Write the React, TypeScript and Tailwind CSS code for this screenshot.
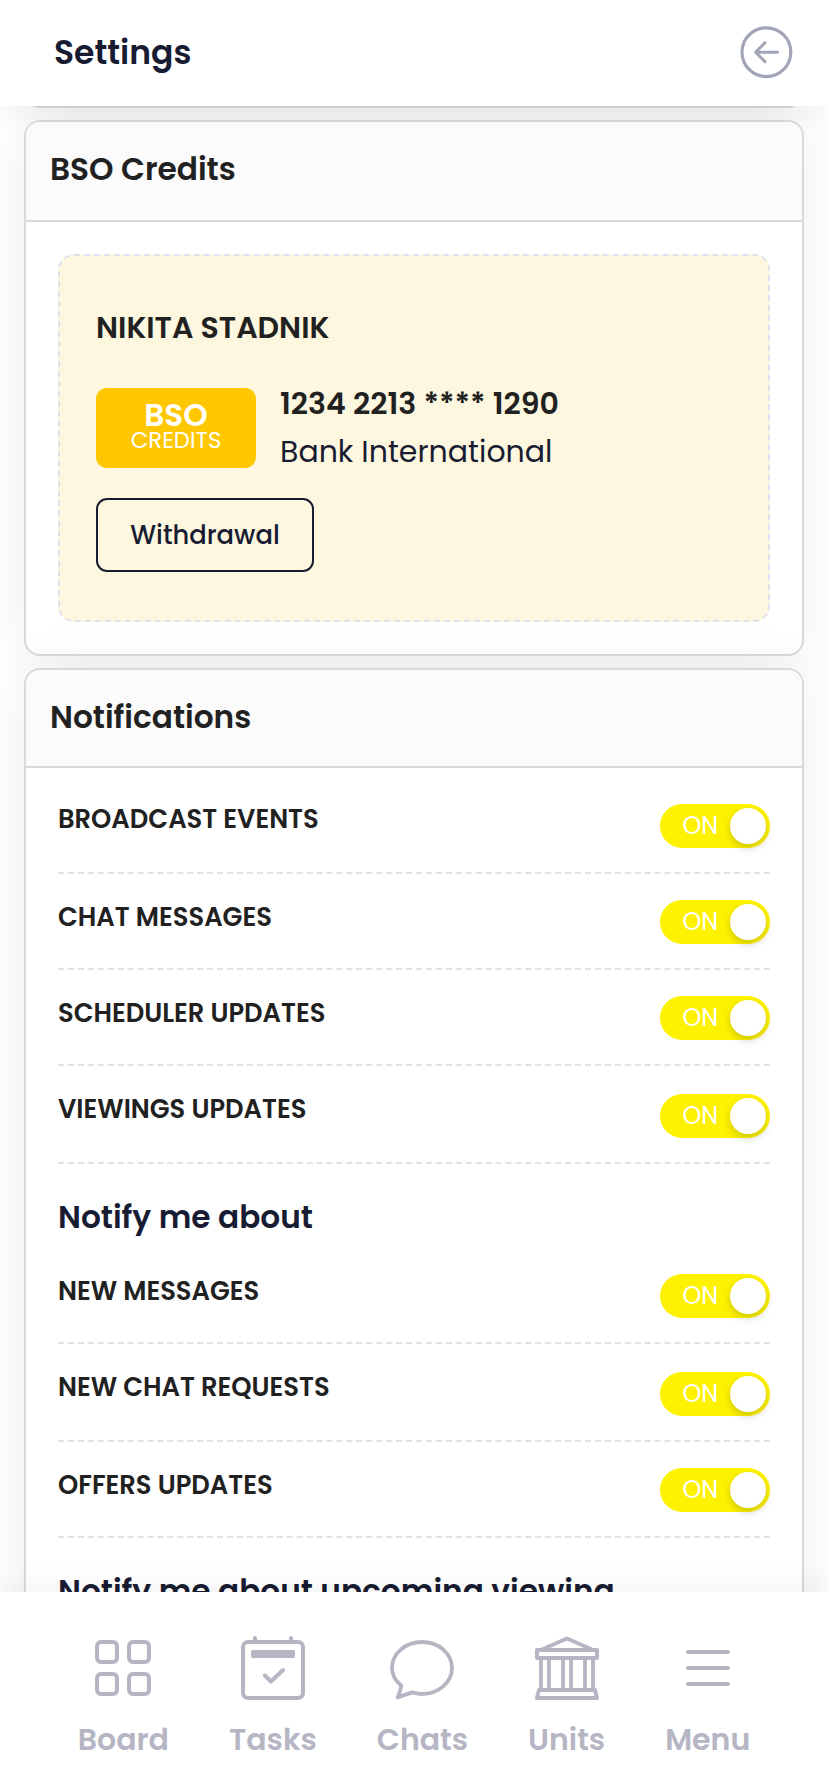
import type { ReactNode } from "react";

const cardClass =
  "mx-6 shrink-0 rounded-2xl border-2 border-[#d9d9d9] bg-white shadow-[0_3px_60px_-5px_rgba(0,0,0,0.088)]";

function CardHeader({ title, className }: { title: string; className: string }) {
  return (
    <div className={`rounded-t-[14px] border-b-2 border-[#d9d9d9] bg-[#fbfbfb] pl-6 ${className}`}>
      <h2 className="text-[31.2px] leading-[48px] font-semibold text-[#212121]">{title}</h2>
    </div>
  );
}

function Toggle() {
  return (
    <div className="mb-6 flex h-11 w-[110px] items-center justify-between rounded-full bg-[#fff200] pr-1 pl-[22.5px]">
      <span className="text-2xl leading-[44px] text-white">ON</span>
      <span className="size-9 rounded-full bg-white shadow-[0_4px_8px_rgba(0,35,11,0.2)]" />
    </div>
  );
}

function SettingRow({ label, className }: { label: string; className: string }) {
  return (
    <div className={`flex items-end justify-between border-b-2 border-dashed border-[#e1e3ea] ${className}`}>
      <span className="mt-[23px] self-start text-[25.8px] leading-10 font-semibold text-[#212121]">{label}</span>
      <Toggle />
    </div>
  );
}

function GroupTitle({ children }: { children: ReactNode }) {
  return <h3 className="h-[84px] pt-[33px] text-[31.2px] leading-10 font-semibold text-[#181c32]">{children}</h3>;
}

function NavItem({ label, children }: { label: string; children: ReactNode }) {
  return (
    <div className="flex flex-col items-center">
      <svg width="68" height="68" viewBox="0 0 68 68" fill="none" stroke="currentColor" strokeWidth="4" strokeLinecap="round" strokeLinejoin="round">
        {children}
      </svg>
      <span className="mt-[14px] text-[30px] leading-[47px] font-semibold">{label}</span>
    </div>
  );
}

export default function App() {
  return (
    <div className="flex h-[1791px] w-full flex-col overflow-hidden bg-white font-[Poppins,sans-serif]">
      <header className="relative z-10 flex h-[106px] shrink-0 items-center justify-between bg-white pr-[34px] pl-[54px] shadow-[0_4px_30px_rgba(0,0,0,0.05)]">
        <h1 className="text-[33px] leading-[50px] font-semibold text-[#181c32]">Settings</h1>
        <svg className="-mt-[2px] text-[#a1a5b7]" width="56" height="56" viewBox="0 0 56 56" fill="none" stroke="currentColor" strokeWidth="3.2" strokeLinecap="round" strokeLinejoin="round">
          <circle cx="28.4" cy="28.2" r="24.4" />
          <path d="M39.6 28.2H17.6M27 18.8L17.6 28.2L27 37.6" strokeWidth="3" />
        </svg>
      </header>

      <main className="flex min-h-0 flex-1 flex-col overflow-hidden">
        <div className={`${cardClass} -mt-[98px] h-[100px]`} />

        <section className={`${cardClass} mt-3 h-[536px]`}>
          <CardHeader title="BSO Credits" className="h-[100px] pt-[23px]" />
          <div className="mx-8 mt-8 h-[368px] rounded-2xl border-2 border-dashed border-[#dfe2ec] bg-[#fef7df] px-9 pt-[48px]">
            <h3 className="text-[30px] leading-[48px] font-semibold text-[#212121]">NIKITA STADNIK</h3>
            <div className="mt-[28px] flex">
              <div className="mt-2 flex h-20 w-40 flex-col items-center rounded-[11px] bg-[#ffc700] pt-[13px] text-white">
                <span className="text-[31.2px] leading-7 font-semibold">BSO</span>
                <span className="text-[22.8px] leading-[23px]">CREDITS</span>
              </div>
              <div className="ml-6 flex flex-col">
                <span className="text-[30px] leading-[48px] font-semibold text-[#212121]">1234 2213 **** 1290</span>
                <span className="text-[30px] leading-[48px] text-[#181c32]">Bank International</span>
              </div>
            </div>
            <button className="mt-[22px] h-[74px] w-[218px] rounded-[11px] border-2 border-[#181c32] text-[25.8px] font-medium text-[#181c32]">
              Withdrawal
            </button>
          </div>
        </section>

        <section className={`${cardClass} mt-3 h-[1100px]`}>
          <CardHeader title="Notifications" className="h-[98px] pt-[23px]" />
          <div className="px-8 pt-2">
            <SettingRow label="BROADCAST EVENTS" className="h-[98px]" />
            <SettingRow label="CHAT MESSAGES" className="h-24" />
            <SettingRow label="SCHEDULER UPDATES" className="h-24" />
            <SettingRow label="VIEWINGS UPDATES" className="h-[98px]" />
            <GroupTitle>Notify me about</GroupTitle>
            <SettingRow label="NEW MESSAGES" className="h-24" />
            <SettingRow label="NEW CHAT REQUESTS" className="h-[98px]" />
            <SettingRow label="OFFERS UPDATES" className="h-24" />
            <GroupTitle>Notify me about upcoming viewing</GroupTitle>
          </div>
        </section>
      </main>

      <nav className="relative z-10 flex h-[199px] shrink-0 justify-center gap-[60px] bg-white pt-[42px] text-[#b5b5c3] shadow-[0_-4px_30px_rgba(0,0,0,0.06)]">
        <NavItem label="Board">
          <rect x="8" y="8" width="20" height="20" rx="4" />
          <rect x="40" y="8" width="20" height="20" rx="4" />
          <rect x="8" y="40" width="20" height="20" rx="4" />
          <rect x="40" y="40" width="20" height="20" rx="4" />
        </NavItem>
        <NavItem label="Tasks">
          <rect x="4" y="8" width="60" height="56" rx="5" />
          <path d="M16 4V7M52 4V7M26 41.5L32 47.5L44 36" />
          <rect x="12" y="16" width="44" height="8" rx="2" fill="currentColor" stroke="none" />
        </NavItem>
        <NavItem label="Chats">
          <path d="M13.2 51.5C7.4 46.8 4 40.6 4 34C4 19.6 17.4 8 34 8S64 19.6 64 34S50.6 60 34 60C30.4 60 27.6 59.3 24.2 58.4L9.6 63.4C11.2 59.6 12.8 56 13.2 51.5Z" strokeWidth="3.8" />
        </NavItem>
        <NavItem label="Units">
          <path d="M4 16H64V24H4ZM9 15.5L34 4.5L59 15.5M6 56H62L64 64H4Z" />
          <path d="M8 24V56M16 24V56M30 24V56M38 24V56M52 24V56M60 24V56" strokeWidth="3.8" />
        </NavItem>
        <NavItem label="Menu">
          <path d="M14 18H54M14 34H54M14 50H54" />
        </NavItem>
      </nav>
    </div>
  );
}
